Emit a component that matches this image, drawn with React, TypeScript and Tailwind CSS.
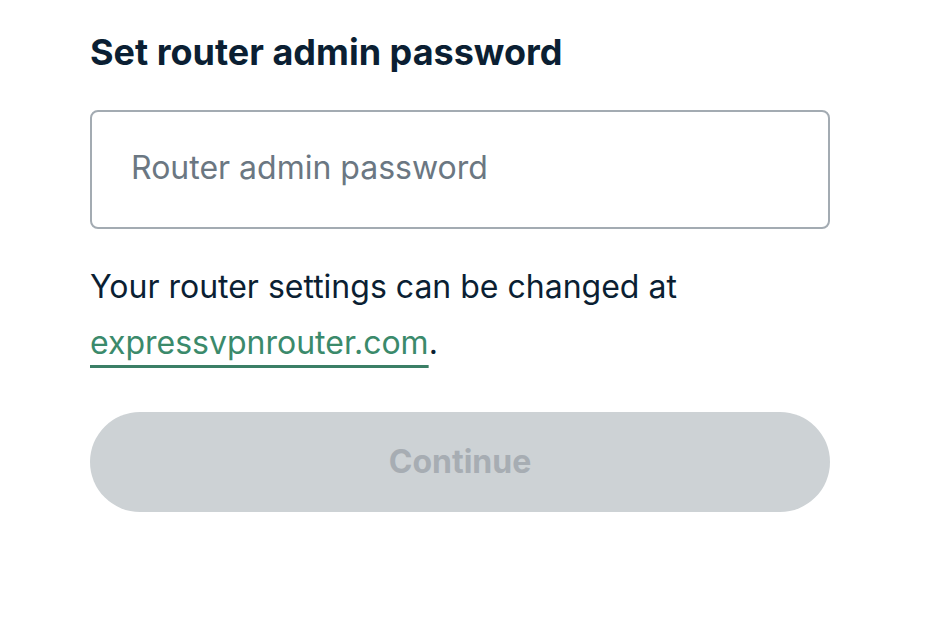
import React, { useState } from 'react';

const App: React.FC = () => {
    const [password, setPassword] = useState('');

    return (
        <div className="min-h-screen w-full bg-white font-['Inter',sans-serif] text-[#0b1f33]">
            <div className="w-[740px] ml-[90px] pt-[30px] flex flex-col">
                <h1 className="text-[36px] leading-[44px] font-bold">
                    Set router admin password
                </h1>

                {/* Password field */}
                <input
                    type="password"
                    value={password}
                    onChange={(e) => setPassword(e.target.value)}
                    placeholder="Router admin password"
                    className="mt-[36px] h-[119px] w-full rounded-[8px] border-[2px] border-[#a3abb2] px-[39px] pb-[4px] text-[32px] text-[#0b1f33] placeholder:text-[#6b7782] outline-none"
                />

                <p className="mt-[30px] text-[32px] leading-[56px]">
                    Your router settings can be changed at{' '}
                    <a
                        href="#"
                        className="text-[#3b8a6b] underline decoration-[#3b7f66] decoration-[3px] underline-offset-[11px]"
                    >
                        expressvpnrouter.com
                    </a>
                    .
                </p>

                <button
                    disabled
                    className="mt-[41px] h-[100px] w-full rounded-full bg-[#cdd2d5] text-[32px] font-bold text-[#a7adb3]"
                >
                    Continue
                </button>
            </div>
        </div>
    );
};

export default App;
